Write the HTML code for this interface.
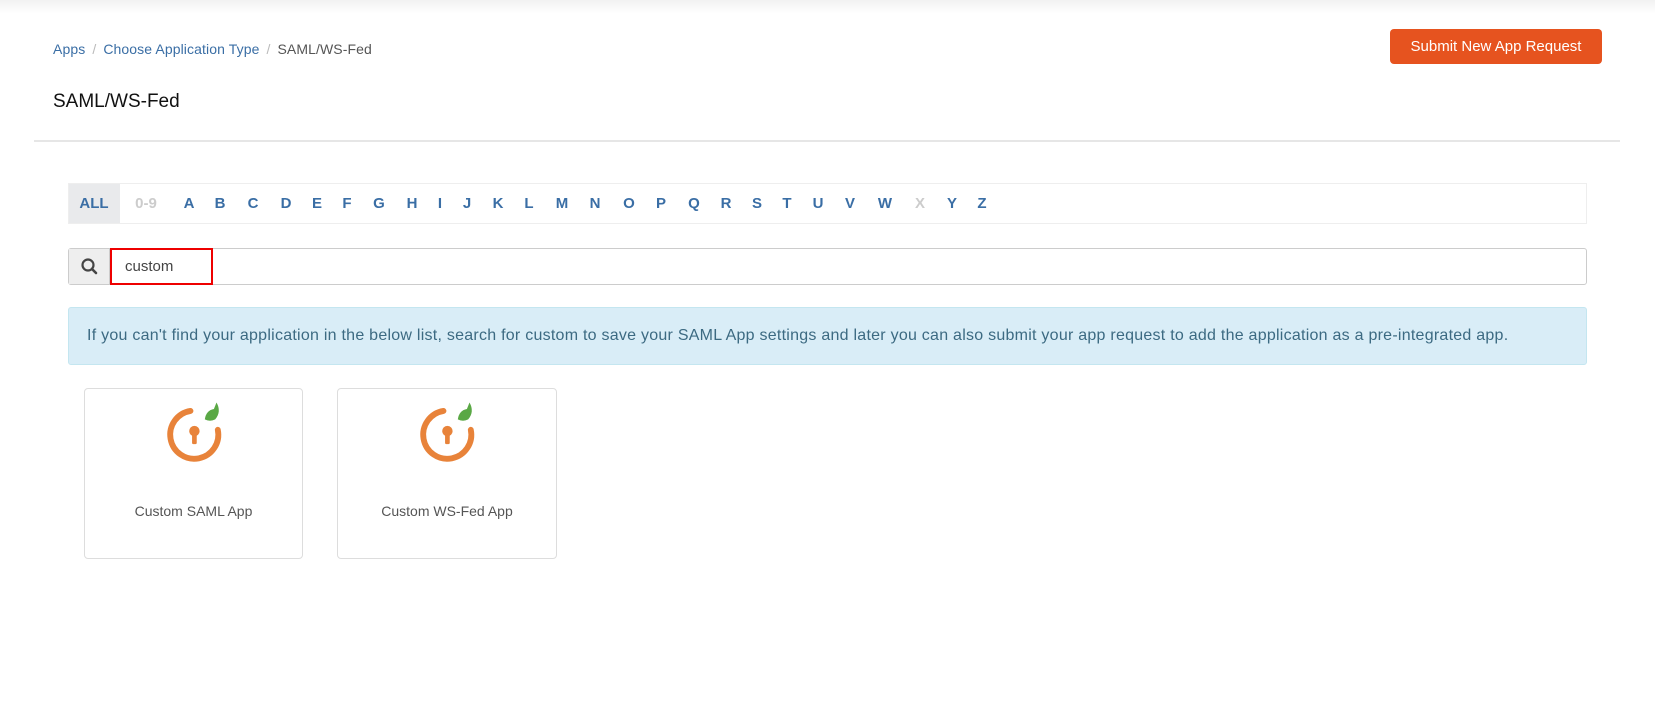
<!DOCTYPE html>
<html><head><meta charset="utf-8"><style>
*{box-sizing:border-box;margin:0;padding:0}
body{width:1655px;height:704px;background:#fff;font-family:"Liberation Sans",sans-serif;position:relative;overflow:hidden}
.a{position:absolute}
.top{left:0;top:0;width:1655px;height:14px;background:linear-gradient(#f1f1f1,#fff)}
.bc{left:53px;top:41px;font-size:14px;color:#555;white-space:nowrap;letter-spacing:0.1px}
.bc a{color:#3a6ea5;text-decoration:none}
.bc .s{color:#bbb;margin:0 7px}
h1{position:absolute;left:53px;top:91px;font-size:19px;font-weight:normal;color:#111}
.hr{left:34px;top:140px;width:1586px;height:2px;background:#e6e6e6}
.btn{left:1390px;top:29px;width:212px;height:35px;background:#e6531f;border-radius:4px;color:#fff;font-size:15px;text-align:center;line-height:35px}
.alpha{left:68px;top:183px;width:1519px;height:41px;border:1px solid #eee}
.alpha span{position:absolute;top:11px;font-size:15px;font-weight:bold;color:#3a6ea5;transform:translateX(-50%)}
.alpha .g{color:#ccc}
.all{left:0;top:0;width:51px;height:39px;background:#e9eaec}
.search{left:68px;top:248px;width:1519px;height:37px;border:1px solid #ccc;border-radius:3px}
.addon{left:0;top:0;width:41px;height:35px;background:#eee;border-right:1px solid #ccc}
.red{left:110px;top:248px;width:103px;height:37px;border:2px solid #e00}
.ct{left:125px;top:258px;font-size:15px;color:#444}
.alert{left:68px;top:307px;width:1519px;height:58px;background:#d9edf7;border:1px solid #c4e6f0;border-radius:3px;color:#3c6a82;font-size:16px;line-height:56px;padding-left:18px;white-space:nowrap;letter-spacing:0.25px}
.card{top:388px;height:171px;border:1px solid #ddd;border-radius:4px}
.card .l{position:absolute;width:100%;top:114px;text-align:center;font-size:14px;color:#555}
.card svg{position:absolute;left:50%;top:7px;margin-left:-36px}
</style></head><body>
<div class="a top"></div>
<div class="a bc"><a>Apps</a><span class="s">/</span><a>Choose Application Type</a><span class="s">/</span>SAML/WS-Fed</div>
<h1>SAML/WS-Fed</h1>
<div class="a btn">Submit New App Request</div>
<div class="a hr"></div>
<div class="a alpha">
<div class="a all"></div>
<span style="left:25px">ALL</span><span class="g" style="left:77px">0-9</span>
<span style="left:120px">A</span><span style="left:151px">B</span><span style="left:184px">C</span><span style="left:217px">D</span><span style="left:248px">E</span><span style="left:278px">F</span><span style="left:310px">G</span><span style="left:343px">H</span><span style="left:371px">I</span><span style="left:398px">J</span><span style="left:429px">K</span><span style="left:460px">L</span><span style="left:493px">M</span><span style="left:526px">N</span><span style="left:560px">O</span><span style="left:592px">P</span><span style="left:625px">Q</span><span style="left:657px">R</span><span style="left:688px">S</span><span style="left:718px">T</span><span style="left:749px">U</span><span style="left:781px">V</span><span style="left:816px">W</span><span class="g" style="left:851px">X</span><span style="left:883px">Y</span><span style="left:913px">Z</span>
</div>
<div class="a search"><div class="a addon"><svg width="41" height="35" viewBox="0 0 41 35"><circle cx="19" cy="16" r="5.5" fill="none" stroke="#444" stroke-width="2.2"/><line x1="23" y1="20" x2="27" y2="24" stroke="#444" stroke-width="2.6" stroke-linecap="round"/></svg></div></div>
<div class="a red"></div>
<div class="a ct">custom</div>
<div class="a alert">If you can't find your application in the below list, search for custom to save your SAML App settings and later you can also submit your app request to add the application as a pre-integrated app.</div>
<div class="a card" style="left:84px;width:219px"><svg width="78" height="78" viewBox="0 0 60 60"><path d="M25 11.5 A18.5 18.5 0 1 0 46 26" fill="none" stroke="#e8833a" stroke-width="4.5" stroke-linecap="round"/><circle cx="28" cy="27" r="4" fill="#e8833a"/><rect x="26.2" y="28" width="3.6" height="9" rx="1" fill="#e8833a"/><path d="M36 18 Q37 11 43 10 L45 5 Q49 12 44 18 Q40 20 36 18 Z" fill="#5aa845"/></svg><div class="l">Custom SAML App</div></div>
<div class="a card" style="left:337px;width:220px"><svg width="78" height="78" viewBox="0 0 60 60"><path d="M25 11.5 A18.5 18.5 0 1 0 46 26" fill="none" stroke="#e8833a" stroke-width="4.5" stroke-linecap="round"/><circle cx="28" cy="27" r="4" fill="#e8833a"/><rect x="26.2" y="28" width="3.6" height="9" rx="1" fill="#e8833a"/><path d="M36 18 Q37 11 43 10 L45 5 Q49 12 44 18 Q40 20 36 18 Z" fill="#5aa845"/></svg><div class="l">Custom WS-Fed App</div></div>
</body></html>
